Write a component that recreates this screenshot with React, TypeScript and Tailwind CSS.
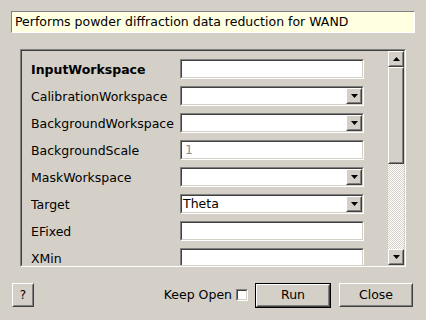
import React from "react";

const Sunken = ({ className = "", innerClass = "", children }: { className?: string; innerClass?: string; children?: React.ReactNode }) => (
  <div className={"border border-t-[#808080] border-l-[#808080] border-b-white border-r-white " + className}>
    <div className={"h-full w-full border border-t-[#404040] border-l-[#404040] border-b-[#d4d0c8] border-r-[#d4d0c8] " + innerClass}>
      {children}
    </div>
  </div>
);

const Raised = ({ className = "", innerClass = "", children }: { className?: string; innerClass?: string; children?: React.ReactNode }) => (
  <div className={"border border-t-white border-l-white border-b-[#404040] border-r-[#404040] bg-[#d4d0c8] " + className}>
    <div className={"h-full w-full border border-t-[#d4d0c8] border-l-[#d4d0c8] border-b-[#808080] border-r-[#808080] " + innerClass}>
      {children}
    </div>
  </div>
);

const Down = () => (
  <svg width="7" height="4" viewBox="0 0 7 4"><path d="M0 0H7L3.5 4Z" fill="#000" /></svg>
);
const Up = () => (
  <svg width="7" height="4" viewBox="0 0 7 4"><path d="M0 4H7L3.5 0Z" fill="#000" /></svg>
);

const TextBox = ({ value, placeholder }: { value?: string; placeholder?: string }) => (
  <Sunken className="h-[20px] w-[184px]" innerClass="bg-white flex items-center pl-[3px] pt-[1px] overflow-hidden">
    {value && <span className="text-black leading-none">{value}</span>}
    {placeholder && <span className="text-[#8e8e8e] leading-none">{placeholder}</span>}
  </Sunken>
);

const Combo = ({ value }: { value?: string }) => (
  <Sunken className="h-[20px] w-[184px]" innerClass="bg-white flex items-stretch overflow-hidden">
    <div className="flex-1 flex items-center pl-[1px] pt-[1px] leading-none">{value}</div>
    <Raised className="w-[16px]" innerClass="flex items-center justify-center">
      <Down />
    </Raised>
  </Sunken>
);

const rows: { label: string; bold?: boolean; kind: "text" | "combo"; value?: string; placeholder?: string }[] = [
  { label: "InputWorkspace", bold: true, kind: "text" },
  { label: "CalibrationWorkspace", kind: "combo" },
  { label: "BackgroundWorkspace", kind: "combo" },
  { label: "BackgroundScale", kind: "text", placeholder: "1" },
  { label: "MaskWorkspace", kind: "combo" },
  { label: "Target", kind: "combo", value: "Theta" },
  { label: "EFixed", kind: "text" },
  { label: "XMin", kind: "text" },
];

export default function App() {
  return (
    <div
      className="w-[426px] h-[320px] bg-[#d4d0c8] flex flex-col text-[12.5px] text-black overflow-hidden"
      style={{ fontFamily: '"DejaVu Sans", sans-serif' }}
    >
      <div className="mt-[11px] mx-[11px] h-[22px] bg-[#ffffe1] border border-t-[#808080] border-l-[#808080] border-b-white border-r-white flex items-center pl-[3px]">
        <span className="leading-none">Performs powder diffraction data reduction for WAND</span>
      </div>

      <Sunken className="mt-[16px] ml-[20px] mr-[20px] h-[218px]" innerClass="flex">
        <div className="flex-1 overflow-hidden pt-[8px] pl-[9px] flex flex-col gap-[7px]">
          {rows.map((r) => (
            <div key={r.label} className="flex items-center h-[20px] shrink-0">
              <div className={"w-[149px] leading-none whitespace-nowrap pt-[2px] " + (r.bold ? "font-bold" : "")}>{r.label}</div>
              {r.kind === "text" ? <TextBox value={r.value} placeholder={r.placeholder} /> : <Combo value={r.value} />}
            </div>
          ))}
        </div>
        <div className="w-[16px] flex flex-col">
          <Raised className="h-[16px] shrink-0" innerClass="flex items-center justify-center">
            <Up />
          </Raised>
          <Raised className="h-[97px] shrink-0" />
          <div className="flex-1 bg-[image:repeating-conic-gradient(#ffffff_0%_25%,#d4d0c8_0%_50%)] bg-[length:2px_2px]" />
          <Raised className="h-[16px] shrink-0" innerClass="flex items-center justify-center">
            <Down />
          </Raised>
        </div>
      </Sunken>

      <div className="mt-[16px] pl-[12px] pr-[13px] flex items-center h-[24px]">
        <Raised className="w-[22px] h-[24px]" innerClass="flex items-center justify-center">
          <span className="leading-none text-[12px]">?</span>
        </Raised>
        <div className="flex-1" />
        <span className="leading-none">Keep Open</span>
        <Sunken className="ml-[4px] w-[12px] h-[12px]" innerClass="bg-white" />
        <div className="ml-[7px] w-[76px] h-[25px] border border-black">
          <Raised className="h-full" innerClass="flex items-center justify-center">
            <span className="leading-none">Run</span>
          </Raised>
        </div>
        <Raised className="ml-[8px] w-[74px] h-[24px]" innerClass="flex items-center justify-center">
          <span className="leading-none">Close</span>
        </Raised>
      </div>
    </div>
  );
}
